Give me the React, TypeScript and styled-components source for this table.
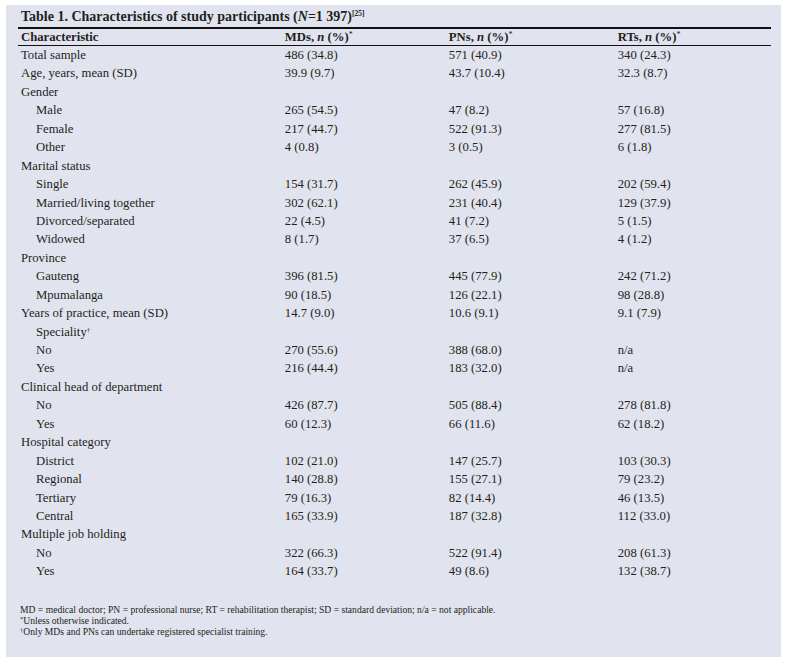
import styled, { createGlobalStyle } from 'styled-components';

const GlobalStyle = createGlobalStyle`
  html, body {
    margin: 0;
    padding: 0;
    background: #ffffff;
  }
  body {
    font-family: "Liberation Serif", "Times New Roman", serif;
    color: #231f20;
  }
`;

const Panel = styled.div`
  box-sizing: border-box;
  margin: 5px 0 0 6px;
  width: 775px;
  height: 652px;
  background: #e1e4ee;
  padding: 2px 10px 0 12px;
`;

const Title = styled.div`
  font-size: 14px;
  font-weight: bold;
  line-height: 20px;
  padding-left: 3px;
  border-bottom: 2px solid #111;
  sup {
    font-size: 7.5px;
    line-height: 0;
    vertical-align: 5px;
  }
`;

const Table = styled.table`
  width: 100%;
  border-collapse: collapse;
  font-size: 12.7px;
`;

const HeadCell = styled.th<{ $w: number }>`
  width: ${(p) => p.$w}px;
  text-align: left;
  font-weight: bold;
  height: 16px;
  line-height: 16px;
  padding: 0 0 0 3px;
  border-bottom: 1px solid #111;
  sup {
    font-size: 8px;
    font-weight: normal;
    line-height: 0;
    vertical-align: 4px;
  }
`;

const Row = styled.tr`
  height: 18.43px;
`;

const Cell = styled.td<{ $indent?: boolean }>`
  padding: 0 0 0 ${(p) => (p.$indent ? 18 : 3)}px;
  line-height: 18.43px;
  white-space: nowrap;
  sup {
    font-size: 7px;
    line-height: 0;
    vertical-align: 4px;
  }
`;

const Notes = styled.div`
  margin-top: 23px;
  padding-left: 2px;
  font-size: 9.6px;
  line-height: 11px;
  sup {
    font-size: 6.5px;
    line-height: 0;
    vertical-align: 3px;
  }
`;

type Entry = [string, string, string, string, boolean?, string?];

const rows: Entry[] = [
  ['Total sample', '486 (34.8)', '571 (40.9)', '340 (24.3)'],
  ['Age, years, mean (SD)', '39.9 (9.7)', '43.7 (10.4)', '32.3 (8.7)'],
  ['Gender', '', '', ''],
  ['Male', '265 (54.5)', '47 (8.2)', '57 (16.8)', true],
  ['Female', '217 (44.7)', '522 (91.3)', '277 (81.5)', true],
  ['Other', '4 (0.8)', '3 (0.5)', '6 (1.8)', true],
  ['Marital status', '', '', ''],
  ['Single', '154 (31.7)', '262 (45.9)', '202 (59.4)', true],
  ['Married/living together', '302 (62.1)', '231 (40.4)', '129 (37.9)', true],
  ['Divorced/separated', '22 (4.5)', '41 (7.2)', '5 (1.5)', true],
  ['Widowed', '8 (1.7)', '37 (6.5)', '4 (1.2)', true],
  ['Province', '', '', ''],
  ['Gauteng', '396 (81.5)', '445 (77.9)', '242 (71.2)', true],
  ['Mpumalanga', '90 (18.5)', '126 (22.1)', '98 (28.8)', true],
  ['Years of practice, mean (SD)', '14.7 (9.0)', '10.6 (9.1)', '9.1 (7.9)'],
  ['Speciality', '', '', '', true, '†'],
  ['No', '270 (55.6)', '388 (68.0)', 'n/a', true],
  ['Yes', '216 (44.4)', '183 (32.0)', 'n/a', true],
  ['Clinical head of department', '', '', ''],
  ['No', '426 (87.7)', '505 (88.4)', '278 (81.8)', true],
  ['Yes', '60 (12.3)', '66 (11.6)', '62 (18.2)', true],
  ['Hospital category', '', '', ''],
  ['District', '102 (21.0)', '147 (25.7)', '103 (30.3)', true],
  ['Regional', '140 (28.8)', '155 (27.1)', '79 (23.2)', true],
  ['Tertiary', '79 (16.3)', '82 (14.4)', '46 (13.5)', true],
  ['Central', '165 (33.9)', '187 (32.8)', '112 (33.0)', true],
  ['Multiple job holding', '', '', ''],
  ['No', '322 (66.3)', '522 (91.4)', '208 (61.3)', true],
  ['Yes', '164 (33.7)', '49 (8.6)', '132 (38.7)', true],
];

const groups = [
  { label: 'MDs', w: 164 },
  { label: 'PNs', w: 169 },
  { label: 'RTs', w: 156 },
];

export default function App() {
  return (
    <>
      <GlobalStyle />
      <Panel>
        <Title>
          Table 1. Characteristics of study participants (<i>N</i>=1 397)<sup>[25]</sup>
        </Title>
        <Table>
          <thead>
            <tr>
              <HeadCell $w={264}>Characteristic</HeadCell>
              {groups.map((g) => (
                <HeadCell key={g.label} $w={g.w}>
                  {g.label}, <i>n</i> (%)<sup>*</sup>
                </HeadCell>
              ))}
            </tr>
          </thead>
          <tbody>
            {rows.map(([label, md, pn, rt, indent, mark], i) => (
              <Row key={i}>
                <Cell $indent={indent}>
                  {label}
                  {mark && <sup>{mark}</sup>}
                </Cell>
                <Cell>{md}</Cell>
                <Cell>{pn}</Cell>
                <Cell>{rt}</Cell>
              </Row>
            ))}
          </tbody>
        </Table>
        <Notes>
          <div>
            MD = medical doctor; PN = professional nurse; RT = rehabilitation therapist; SD = standard
            deviation; n/a = not applicable.
          </div>
          <div>
            <sup>*</sup>Unless otherwise indicated.
          </div>
          <div>
            <sup>†</sup>Only MDs and PNs can undertake registered specialist training.
          </div>
        </Notes>
      </Panel>
    </>
  );
}
